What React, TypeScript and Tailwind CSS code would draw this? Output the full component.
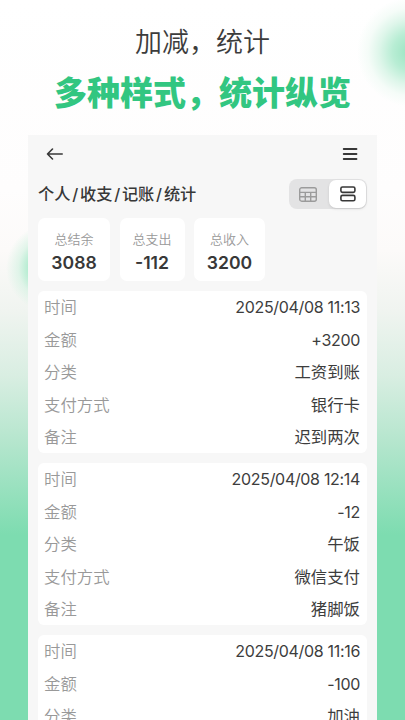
import { Fragment } from 'react';

type Entry = {
  time: string;
  amount: string;
  category: string;
  payment: string;
  note: string;
};

const crumbs = ['个人', '收支', '记账', '统计'];

const totals = [
  { label: '总结余', value: '3088', width: 'w-[72px]' },
  { label: '总支出', value: '-112', width: 'w-[65px]' },
  { label: '总收入', value: '3200', width: 'w-[71px]' },
];

const entries: Entry[] = [
  { time: '2025/04/08 11:13', amount: '+3200', category: '工资到账', payment: '银行卡', note: '迟到两次' },
  { time: '2025/04/08 12:14', amount: '-12', category: '午饭', payment: '微信支付', note: '猪脚饭' },
];

const lastEntry = { time: '2025/04/08 11:16', amount: '-100', category: '加油' };

function BackIcon() {
  return (
    <svg width="18" height="14" viewBox="0 0 18 14" fill="none" stroke="#383838" strokeWidth="1.6" strokeLinecap="round" strokeLinejoin="round">
      <path d="M16.2 7H1.5M6.5 2 1.5 7l5 5" />
    </svg>
  );
}

function MenuIcon() {
  return (
    <svg width="16" height="14" viewBox="0 0 16 14" fill="none" stroke="#383838" strokeWidth="1.8" strokeLinecap="round">
      <path d="M1.7 2h12.8M1.7 7h12.8M1.7 12h12.8" />
    </svg>
  );
}

function TableIcon() {
  return (
    <svg width="18" height="15" viewBox="0 0 18 15" fill="none" stroke="#9b9b9b" strokeWidth="1.4">
      <rect x="0.7" y="0.8" width="16.6" height="13.4" rx="2" />
      <path d="M1 5.4h16M1 9.8h16M6.3 5.4v8.8M11.7 5.4v8.8" />
    </svg>
  );
}

function CardsIcon() {
  return (
    <svg width="16" height="16" viewBox="0 0 16 16" fill="none" stroke="#383838" strokeWidth="1.6">
      <rect x="0.9" y="1" width="14" height="5.4" rx="1.6" />
      <rect x="0.9" y="9.4" width="14" height="5.4" rx="1.6" />
    </svg>
  );
}

function Row({ label, value, numeric }: { label: string; value: string; numeric?: boolean }) {
  return (
    <div className="flex h-[32.4px] items-center justify-between whitespace-nowrap text-[16.4px]">
      <span className="font-[350] text-[#999]">{label}</span>
      <span className={numeric ? 'mb-px text-[16px] tracking-[-0.32px] text-[#3d3d3d]' : 'text-[#3d3d3d]'}>{value}</span>
    </div>
  );
}

export default function App() {
  return (
    <div className="relative flex h-[720px] w-[405px] flex-col overflow-hidden bg-[linear-gradient(180deg,#fff_0px,#fefdfd_190px,#fcfaf9_250px,#f0f4f0_310px,#d9eee2_375px,#b6e6ce_440px,#7ddcb0_535px,#7ddcb0_720px)] font-['Inter','Noto_Sans_CJK_SC',sans-serif]">
      {/* Soft green glows */}
      <div className="absolute left-[357px] top-[-3px] h-[110px] w-[110px] rounded-full bg-[radial-gradient(closest-side,#95e3be_0%,#a5e7c8_15%,#b8edd4_35%,#def6ea_60%,#f5fcf8_80%,#ffffff00_100%)]" />
      <div className="absolute left-[6px] top-[224px] h-[88px] w-[88px] rounded-full bg-[radial-gradient(closest-side,#8adfb5_0%,#a6e7c8_30%,#b6edd2_50%,#d4f2e2aa_72%,#f5faf600_100%)]" />

      <header className="relative flex h-[135px] shrink-0 flex-col items-center whitespace-nowrap pt-[24px]">
        <p className="text-[27px] font-[350] leading-[38px] text-[#3c3c3c]">加减，统计</p>
        <h1 className="mt-[10px] text-[33px] font-black leading-[42px] text-[#32c681]">多种样式，统计纵览</h1>
      </header>

      <main className="relative ml-[28px] flex w-[349px] flex-1 flex-col overflow-hidden bg-[#f7f7f7] px-[10px]">
        <div className="flex h-[38px] shrink-0 items-center justify-between pl-[8px] pr-[9px]">
          <BackIcon />
          <MenuIcon />
        </div>

        <div className="flex h-[42px] shrink-0 items-center justify-between">
          <h2 className="flex text-[16.2px] font-medium text-[#383838]">
            {crumbs.map((crumb, i) => (
              <Fragment key={crumb}>
                {i > 0 && <span className="w-[9.6px] text-center">/</span>}
                <span>{crumb}</span>
              </Fragment>
            ))}
          </h2>
          <div className="flex h-[30px] w-[78px] rounded-[8px] bg-[#e3e3e4] p-px">
            <button className="flex flex-1 items-center justify-center pr-[3px]">
              <TableIcon />
            </button>
            <button className="flex w-[37px] items-center justify-center rounded-[7px] bg-white shadow-sm">
              <CardsIcon />
            </button>
          </div>
        </div>

        <section className="mt-[3px] flex h-[63px] shrink-0 gap-[9.5px]">
          {totals.map((total) => (
            <div key={total.label} className={`${total.width} flex flex-col items-center rounded-[7px] bg-white pt-[10.5px]`}>
              <span className="text-[13px] font-[350] leading-[20px] text-[#999]">{total.label}</span>
              <span className="mt-[2px] text-[17.6px] font-semibold leading-[24px] text-[#383838]">{total.value}</span>
            </div>
          ))}
        </section>

        <section className="mt-[10px] flex min-h-0 flex-1 flex-col gap-[10px]">
          {entries.map((entry) => (
            <article key={entry.time} className="h-[162px] shrink-0 rounded-[6px] bg-white pl-[6px] pr-[7px] pt-[0.5px]">
              <Row label="时间" value={entry.time} numeric />
              <Row label="金额" value={entry.amount} numeric />
              <Row label="分类" value={entry.category} />
              <Row label="支付方式" value={entry.payment} />
              <Row label="备注" value={entry.note} />
            </article>
          ))}
          <article className="flex-1 rounded-t-[6px] bg-white pl-[6px] pr-[7px] pt-[0.5px]">
            <Row label="时间" value={lastEntry.time} numeric />
            <Row label="金额" value={lastEntry.amount} numeric />
            <Row label="分类" value={lastEntry.category} />
          </article>
        </section>
      </main>
    </div>
  );
}
